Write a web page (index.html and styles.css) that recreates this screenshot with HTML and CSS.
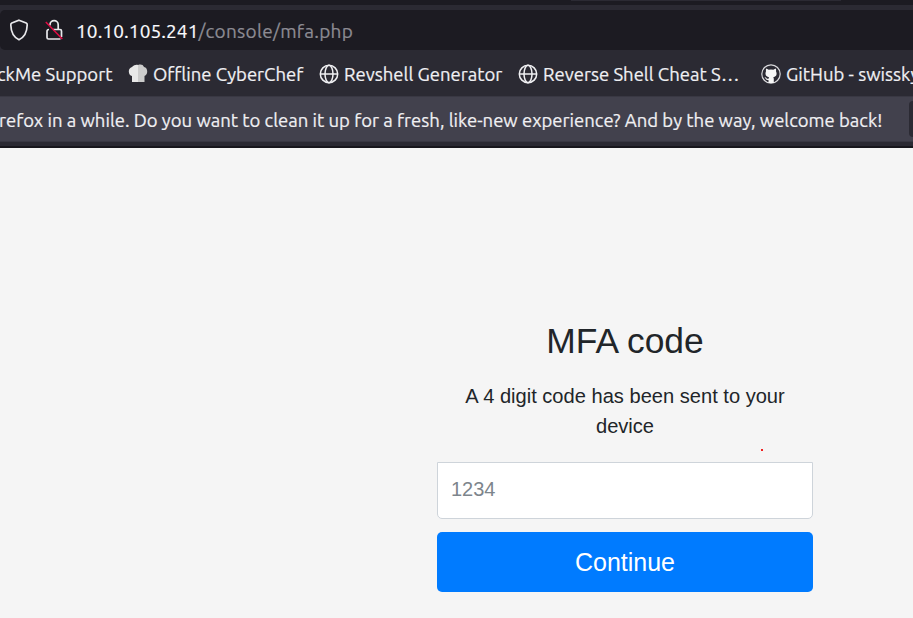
FILE: index.html
```html
<!DOCTYPE html>
<html lang="en">
<head>
<meta charset="utf-8">
<title>MFA code</title>
<link rel="stylesheet" href="styles.css">
</head>
<body>
<header class="browser">
  <div class="tabs"><div class="tab-edge"></div></div>
  <div class="toolbar">
    <div class="address">
      <svg class="shield" viewBox="0 0 20 22"><path d="M10 1.2 L17.2 4 Q18.3 4.5 18.2 6 C18 13.5 15.5 18.2 10 20.7 C4.5 18.2 2 13.5 1.8 6 Q1.7 4.5 2.8 4 Z"/></svg>
      <svg class="lock" viewBox="0 0 18 22"><path d="M5 6.500V5.8a4 4 0 0 1 8.2 0V10.500M4 10.500Q2 10.500 2 12.500v6.100Q2 20 3.500 20h12M8 10.500h7Q16.500 10.500 16.500 12v6"/><path class="slash" d="M.8 3 17.300 20"/></svg>
      <span class="url"><span class="host">10.10.105.241</span><span class="path">/console/mfa.php</span></span>
    </div>
  </div>
  <nav class="bookmarks">
    <a class="bookmark support"><span>ckMe Support</span></a>
    <a class="bookmark chef"><svg viewBox="0 0 20 20"><path class="hat" d="M4 18V12C0 11.500 -.5 4 4 3C6 .8 8.500 .3 10 1V18Z"/><path class="hat-shade" d="M10 1c3-1 5-.3 6 2c4.200 .5 4.200 8 .5 9v6H10Z"/></svg><span>Offline CyberChef</span></a>
    <a class="bookmark revshell"><svg class="globe" viewBox="0 0 20 20"><circle cx="10" cy="10" r="8.7"/><ellipse cx="10" cy="10" rx="4" ry="8.7"/><path d="M1.3 10h17.4"/></svg><span>Revshell Generator</span></a>
    <a class="bookmark cheat"><svg class="globe" viewBox="0 0 20 20"><circle cx="10" cy="10" r="8.7"/><ellipse cx="10" cy="10" rx="4" ry="8.7"/><path d="M1.3 10h17.4"/></svg><span>Reverse Shell Cheat S…</span></a>
    <a class="bookmark github"><svg viewBox="0 0 20 20"><circle class="ring" cx="10" cy="10" r="9.200"/><path class="cat" d="M5.300 4.500l2.400 1.300q2.300-.5 4.600 0l2.400-1.300q.7 1.300.3 2.800c1.500 3.500 0 5.500-2.800 6q.6.800.6 1.800V19H7.500v-3q-2.200.3-3-1.500l-1-1.200q1.500-.2 2.200 1.100.7.700 1.900.3 0-.8.5-1.400c-2.800-.5-4.500-2.500-3.100-6Q4.600 5.800 5.300 4.500Z"/></svg><span>GitHub - swissky</span></a>
  </nav>
  <div class="notice"><span>refox in a while. Do you want to clean it up for a fresh, like-new experience? And by the way, welcome back!</span><div class="notice-button"></div></div>
  <div class="chrome-edge"></div>
</header>
<main class="page">
  <form class="mfa">
    <h1>MFA code</h1>
    <label for="code">A 4 digit code has been sent to your device</label>
    <input id="code" type="text" placeholder="1234">
    <button type="button">Continue</button>
    <i class="mark"></i>
  </form>
</main>
</body>
</html>
```
FILE: styles.css
```css
* { box-sizing: border-box; }
body { margin: 0; width: 913px; height: 618px; overflow: hidden; background: #f5f5f5; font-family: "Liberation Sans", Arial, sans-serif; }
.browser { height: 148px; background: #2b2a33; color: #f0f0f3; font-family: Ubuntu, "Noto Sans", sans-serif; font-size: 18.5px; white-space: nowrap; -webkit-text-stroke: .2px currentColor; }
.tabs { height: 5px; background: #1c1b22; }
.tab-edge { width: 270px; height: 1px; margin-left: 571px; background: #2b2a33; }
.toolbar { height: 45px; padding-top: 5px; }
.address { display: flex; align-items: center; height: 40px; margin-right: -8px; padding-left: 9px; background: #1c1b22; border-radius: 5px; }
.shield, .lock { fill: none; stroke: #e8e8eb; stroke-width: 1.7; }
.shield { width: 20px; height: 22px; }
.lock { width: 18px; height: 22px; margin-left: 16px; }
.lock .slash { stroke: #e20c45; stroke-width: 1.5; }
.url { margin-left: 13px; padding-top: 2px; font-size: 19px; line-height: 24px; }
.url span { display: inline-block; }
.host { color: #fbfbfe; letter-spacing: .1px; }
.path { color: #8c8b93; letter-spacing: .25px; }
.bookmarks { display: flex; align-items: center; height: 46px; padding-top: 1px; }
.bookmark { display: flex; align-items: center; flex: none; line-height: 24px; }
.bookmark svg { width: 20px; height: 20px; margin-right: 5px; flex: none; }
.support { width: 128px; }
.support span { margin-left: -3px; }
.chef { width: 191px; }
.revshell { width: 199px; }
.cheat { width: 243px; }
.hat { fill: #e8e8e8; }
.hat-shade { fill: #cccccc; }
.globe { fill: none; stroke: #f0f0f3; stroke-width: 1.5; }
.ring { fill: none; stroke: #d9d9dc; stroke-width: 1.2; }
.cat { fill: #f7f7f7; }
.notice { display: flex; align-items: center; justify-content: space-between; height: 46px; background: #42414d; border-top: 1px solid #393843; border-bottom: 1px solid #393843; }
.notice span { margin-left: -1px; padding-top: 2px; line-height: 24px; }
.notice-button { width: 4px; height: 36px; flex: none; background: #2b2a33; border-radius: 5px 0 0 5px; }
.chrome-edge { height: 6px; border-bottom: 2px solid #18171d; }
.page { padding: 172px 100px 0 437px; }
.mfa { position: relative; display: flex; flex-direction: column; width: 376px; color: #212529; }
.mfa h1 { margin: 0 0 19px; font-size: 35.4px; line-height: 42px; font-weight: 400; text-align: center; }
.mfa label { padding: 0 15px; font-size: 20.1px; line-height: 30px; text-align: center; }
.mfa input { height: 57.5px; margin: 20.5px 0 12.5px; padding: 0 13px 2px; border: 1px solid #ced4da; border-radius: 0 0 5px 5px; background: #fff; font: 20px "Liberation Sans", Arial, sans-serif; }
.mfa input::placeholder { color: #7d858c; opacity: 1; }
.mfa button { height: 60px; padding: 1px 0 0; border: 0; border-radius: 5px; background: #007bff; color: #fff; font: 25px "Liberation Sans", Arial, sans-serif; }
.mark { position: absolute; top: 129px; left: 324px; width: 2px; height: 2px; background: #f02020; }
```
